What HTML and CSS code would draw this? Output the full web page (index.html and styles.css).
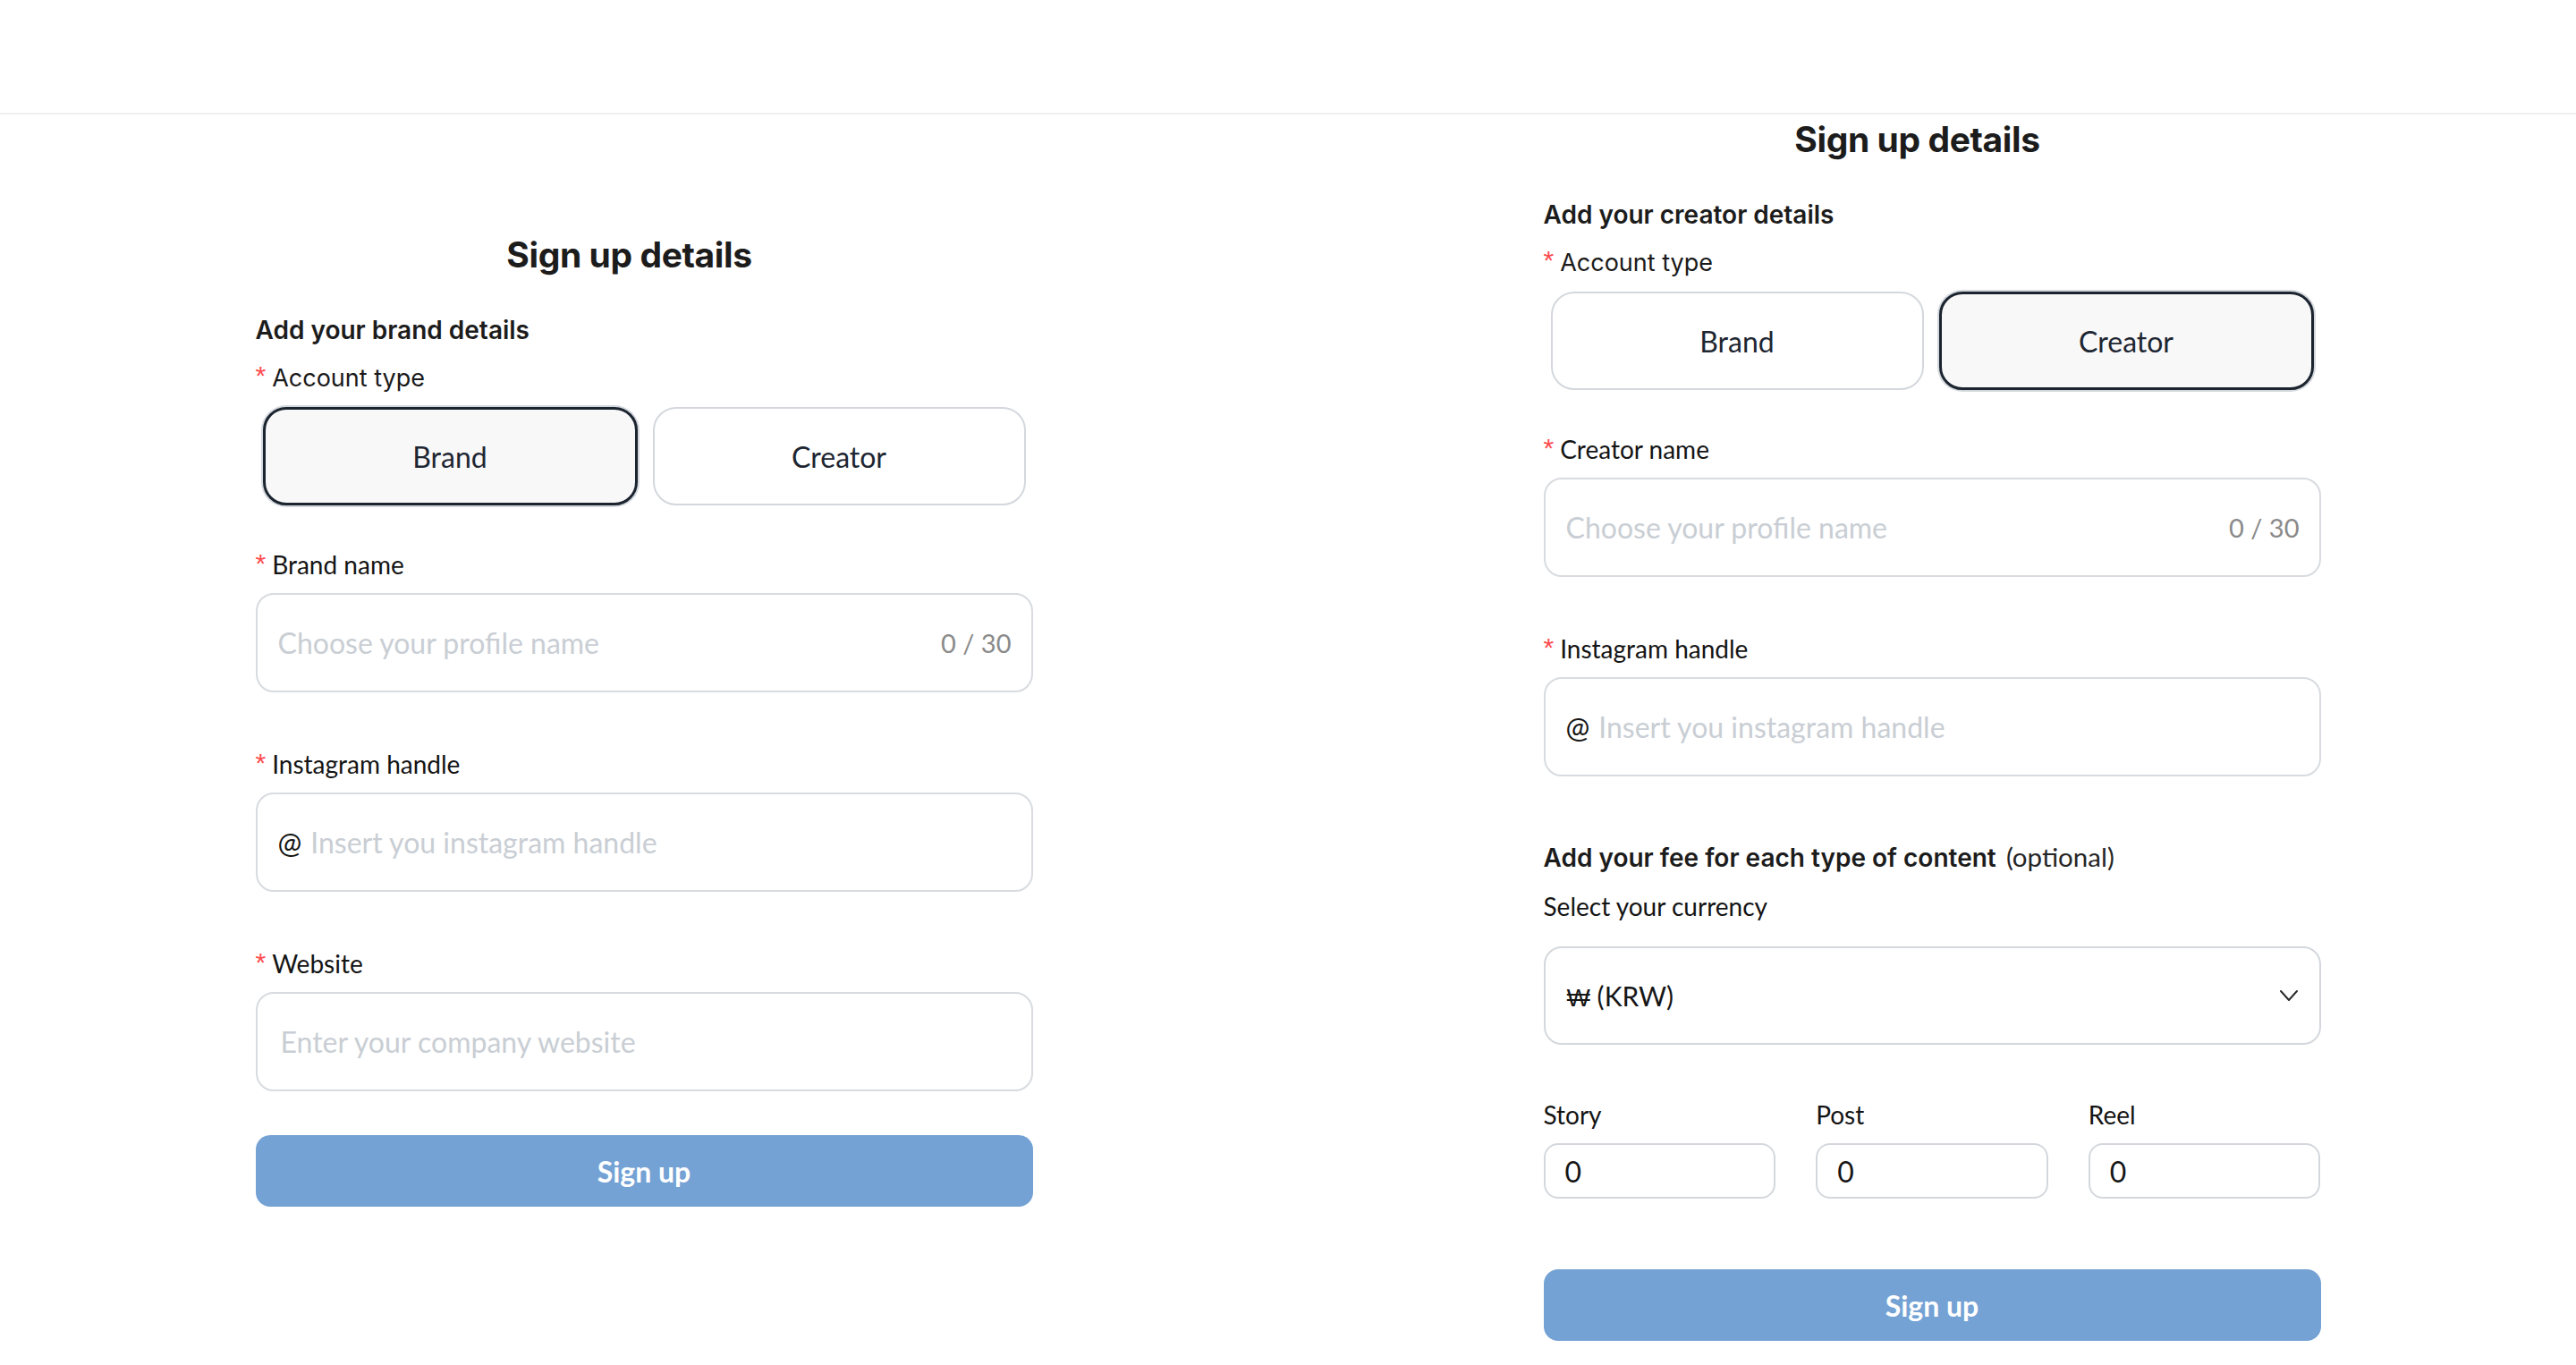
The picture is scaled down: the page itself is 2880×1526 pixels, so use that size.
FILE: index.html
```html
<!DOCTYPE html>
<html lang="en">
<head>
<meta charset="utf-8">
<title>Sign up details</title>
<link rel="stylesheet" href="styles.css">
</head>
<body>
<header class="topbar"></header>
<main class="panes">
  <section class="pane pane-brand">
    <form class="signup">
      <h1 class="title">Sign up details</h1>
      <h2 class="section-title">Add your brand details</h2>
      <div class="field field-first">
        <label class="label label-inter"><span class="req">*</span>Account type</label>
        <div class="choices">
          <button type="button" class="choice is-active">Brand</button>
          <button type="button" class="choice">Creator</button>
        </div>
      </div>
      <div class="field field-after-choices">
        <label class="label"><span class="req">*</span>Brand name</label>
        <div class="textbox">
          <input type="text" placeholder="Choose your profile name">
          <span class="counter">0 / 30</span>
        </div>
      </div>
      <div class="field">
        <label class="label"><span class="req">*</span>Instagram handle</label>
        <div class="textbox">
          <span class="at">@</span>
          <input type="text" placeholder="Insert you instagram handle">
        </div>
      </div>
      <div class="field">
        <label class="label"><span class="req">*</span>Website</label>
        <div class="textbox textbox-wide">
          <input type="text" placeholder="Enter your company website">
        </div>
      </div>
      <button type="button" class="submit submit-brand">Sign up</button>
    </form>
  </section>

  <section class="pane pane-creator">
    <form class="signup">
      <h1 class="title">Sign up details</h1>
      <h2 class="section-title">Add your creator details</h2>
      <div class="field field-first">
        <label class="label label-inter"><span class="req">*</span>Account type</label>
        <div class="choices">
          <button type="button" class="choice">Brand</button>
          <button type="button" class="choice is-active">Creator</button>
        </div>
      </div>
      <div class="field field-after-choices">
        <label class="label"><span class="req">*</span>Creator name</label>
        <div class="textbox">
          <input type="text" placeholder="Choose your profile name">
          <span class="counter">0 / 30</span>
        </div>
      </div>
      <div class="field">
        <label class="label"><span class="req">*</span>Instagram handle</label>
        <div class="textbox">
          <span class="at">@</span>
          <input type="text" placeholder="Insert you instagram handle">
        </div>
      </div>
      <h3 class="fee-title"><span class="fee-strong">Add your fee for each type of content</span> <span class="fee-optional">(optional)</span></h3>
      <label class="label label-plain">Select your currency</label>
      <div class="select">
        <span class="select-value"><span class="won">₩</span> (KRW)</span>
        <svg class="chevron" width="20" height="12" viewBox="0 0 20 12" aria-hidden="true"><polyline points="1,1 10,11 19,1" fill="none" stroke="#2b2b2b" stroke-width="2" stroke-linecap="round" stroke-linejoin="round"/></svg>
      </div>
      <div class="fees">
        <div class="fee">
          <label class="label">Story</label>
          <div class="fee-input">0</div>
        </div>
        <div class="fee">
          <label class="label">Post</label>
          <div class="fee-input">0</div>
        </div>
        <div class="fee">
          <label class="label">Reel</label>
          <div class="fee-input">0</div>
        </div>
      </div>
      <button type="button" class="submit submit-creator">Sign up</button>
    </form>
  </section>
</main>
</body>
</html>
```
FILE: styles.css
```css
* { box-sizing: border-box; }

html, body {
  margin: 0;
  padding: 0;
  background: #ffffff;
}

body {
  width: 2880px;
  height: 1526px;
  overflow: hidden;
  font-family: Lato, "Noto Sans", sans-serif;
  color: #161616;
}

.topbar {
  height: 128px;
  border-bottom: 2px solid #efefef;
}

.panes {
  display: grid;
  grid-template-columns: 1fr 1fr;
}

.pane {
  display: flex;
  justify-content: center;
}

.pane-brand { padding-top: 127px; }
.pane-creator { padding-top: 0; margin-top: -2px; }

.signup {
  width: 869px;
  display: flex;
  flex-direction: column;
}

.title {
  margin: 0;
  padding-right: 33px;
  text-align: center;
  font-family: Inter, "Noto Sans", sans-serif;
  font-weight: 700;
  font-size: 39px;
  letter-spacing: -0.4px;
  line-height: 60px;
  color: #1c1c1c;
}

.section-title {
  margin: 33px 0 0;
  font-family: Inter, "Noto Sans", sans-serif;
  font-weight: 600;
  font-size: 28px;
  line-height: 42px;
  color: #1c1c1c;
}

.field { margin-top: 58px; }
.field-first { margin-top: 9px; }
.field-after-choices { margin-top: 44px; }

.label {
  display: block;
  font-family: Lato, "Noto Sans", sans-serif;
  font-size: 28px;
  line-height: 42px;
  color: #141414;
}

.label-inter {
  font-family: Inter, "Noto Sans", sans-serif;
  font-size: 27px;
  color: #1a1a1a;
}

.req {
  display: inline-block;
  color: #ff4d4f;
  font-family: "Liberation Sans", sans-serif;
  font-size: 30px;
  margin-right: 7px;
  vertical-align: 2px;
}

.choices {
  display: flex;
  gap: 17px;
  padding: 0 8px;
  margin-top: 11px;
}

.choice {
  flex: 1;
  height: 110px;
  border: 2px solid #d4d8dd;
  border-radius: 26px;
  background: #ffffff;
  font-family: Lato, "Noto Sans", sans-serif;
  font-size: 32px;
  color: #1e2632;
  padding: 0;
  cursor: pointer;
}

.choice.is-active {
  border: 3px solid #1c2430;
  background: #f8f8f8;
  box-shadow: 0 0 0 2px #d4d8dd;
}

.textbox {
  margin-top: 11px;
  height: 111px;
  border: 2px solid #d8dbdf;
  border-radius: 20px;
  display: flex;
  align-items: center;
  padding: 0 22px 0 23px;
  font-size: 32px;
  background: #ffffff;
}

.textbox-wide { padding-left: 26px; }

.textbox input {
  flex: 1;
  min-width: 0;
  border: 0;
  outline: 0;
  padding: 0;
  background: transparent;
  font-family: Lato, "Noto Sans", sans-serif;
  font-size: 32px;
  color: #161616;
}

.textbox input::placeholder { color: #c9ced4; }

.counter {
  color: #8a8a8a;
  font-size: 29px;
}

.at {
  margin-right: 10px;
  color: #161616;
}

.submit {
  height: 80px;
  border: 0;
  border-radius: 16px;
  background: #74a2d4;
  color: #ffffff;
  font-family: Lato, "Noto Sans", sans-serif;
  font-weight: 700;
  font-size: 32px;
  padding: 0;
  cursor: pointer;
}

.submit-brand { margin-top: 49px; }
.submit-creator { margin-top: 79px; }

.fee-title {
  margin: 69px 0 0;
  font-size: 28px;
  line-height: 42px;
  font-weight: 400;
  color: #1c1c1c;
}

.fee-strong {
  font-family: Inter, "Noto Sans", sans-serif;
  font-weight: 600;
  font-size: 28px;
}

.fee-optional {
  font-family: Lato, "Noto Sans", sans-serif;
  font-weight: 400;
  font-size: 29.5px;
  color: #262626;
  margin-left: 4px;
}

.label-plain { margin-top: 12px; }

.select {
  margin-top: 24px;
  height: 110px;
  border: 2px solid #d4d8dd;
  border-radius: 20px;
  display: flex;
  align-items: center;
  justify-content: space-between;
  padding: 0 24px;
  font-size: 30px;
  color: #161616;
}

.won {
  font-family: "Liberation Sans", "DejaVu Sans", sans-serif;
  font-weight: 400;
  font-size: 28px;
}

.chevron { display: block; }

.fees {
  margin-top: 57px;
  display: grid;
  grid-template-columns: repeat(3, 1fr);
  column-gap: 45px;
}

.fee-input {
  margin-top: 11px;
  height: 62px;
  border: 2px solid #d4d8dd;
  border-radius: 16px;
  padding: 0 22px;
  display: flex;
  align-items: center;
  font-size: 32px;
  color: #161616;
}
```
